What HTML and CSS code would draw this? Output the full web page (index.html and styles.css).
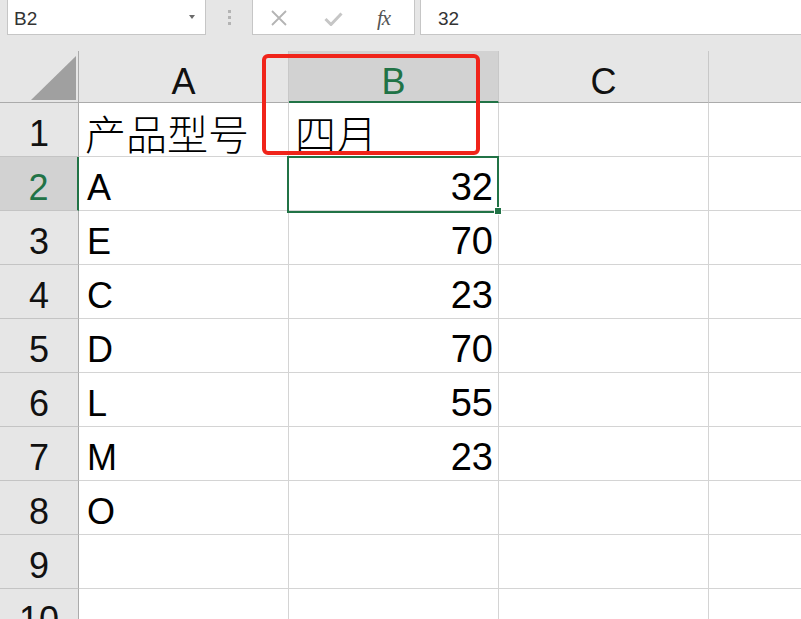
FILE: index.html
```html
<!DOCTYPE html>
<html>
<head>
<meta charset="utf-8">
<link rel="stylesheet" href="styles.css">
</head>
<body>
<div class="top">
  <div class="fbar">
    <div class="namebox"><span class="nbtext">B2</span><span class="arrow"></span></div>
    <div class="dots"><i></i><i></i><i></i></div>
    <div class="btns">
      <svg class="ic-x" width="16" height="16" viewBox="0 0 16 16"><path d="M1 1L15 15M15 1L1 15" stroke="#b4b4b4" stroke-width="1.8" fill="none"/></svg>
      <svg class="ic-ok" width="19" height="14" viewBox="0 0 19 14"><path d="M1.5 7L7 12.5L17.5 1.5" stroke="#c6c6c6" stroke-width="3" fill="none"/></svg>
      <span class="fx">fx</span>
    </div>
    <div class="formula">32</div>
  </div>
</div>
<div class="sheet">
  <div class="corner"><div class="tri"></div></div>
  <div class="ch">A</div><div class="ch sel">B</div><div class="ch">C</div><div class="ch last"></div>

  <div class="rh">1</div><div class="c"><span class="cjk">产品型号</span></div><div class="c"><span class="cjk">四月</span></div><div class="c"></div><div class="c last"></div>
  <div class="rh sel">2</div><div class="c">A</div><div class="c num">32</div><div class="c"></div><div class="c last"></div>
  <div class="rh">3</div><div class="c">E</div><div class="c num">70</div><div class="c"></div><div class="c last"></div>
  <div class="rh">4</div><div class="c">C</div><div class="c num">23</div><div class="c"></div><div class="c last"></div>
  <div class="rh">5</div><div class="c">D</div><div class="c num">70</div><div class="c"></div><div class="c last"></div>
  <div class="rh">6</div><div class="c">L</div><div class="c num">55</div><div class="c"></div><div class="c last"></div>
  <div class="rh">7</div><div class="c">M</div><div class="c num">23</div><div class="c"></div><div class="c last"></div>
  <div class="rh">8</div><div class="c">O</div><div class="c num"></div><div class="c"></div><div class="c last"></div>
  <div class="rh">9</div><div class="c"></div><div class="c num"></div><div class="c"></div><div class="c last"></div>
  <div class="rh">10</div><div class="c"></div><div class="c num"></div><div class="c"></div><div class="c last"></div>

  <div class="selbox"><div class="handle"></div></div>
  <div class="mark"></div>
</div>
</body>
</html>
```

FILE: styles.css
```css
* { box-sizing: border-box; margin: 0; padding: 0; }
html, body { width: 801px; height: 619px; overflow: hidden; background: #fff; }
body { font-family: "Liberation Sans", "Noto Sans CJK SC", sans-serif; color: #000; }

.top { background: #e6e6e6; height: 51px; }
.fbar { display: flex; height: 35px; }
.namebox {
  margin-left: 7px; width: 199px; height: 35px; background: #fff;
  border: 1px solid #c6c6c6; border-top: 0;
  display: flex; justify-content: space-between; align-items: flex-start;
}
.nbtext { font-size: 19px; line-height: 28px; padding: 5px 0 0 6px; color: #333; }
.arrow {
  margin: 15px 10px 0 0; width: 0; height: 0;
  border-left: 3.5px solid transparent; border-right: 3.5px solid transparent;
  border-top: 4px solid #6a6a6a;
}
.dots { width: 46px; display: flex; flex-direction: column; align-items: center; gap: 3px; padding-top: 10px; }
.dots i { display: block; width: 3px; height: 3px; background: #b4b4b4; }
.btns {
  width: 163px; height: 35px; background: #fff; border: 1px solid #c6c6c6; border-top: 0;
  display: flex; align-items: flex-start;
}
.ic-x { margin: 10px 0 0 18px; }
.ic-ok { margin: 12px 0 0 37px; }
.fx {
  margin: 5px 0 0 34px; font-family: "Liberation Serif", serif; font-style: italic;
  font-size: 21px; line-height: 26px; color: #555; letter-spacing: -1px;
}
.formula {
  flex: 1; margin-left: 5px; height: 35px; background: #fff;
  border: 1px solid #c6c6c6; border-top: 0; border-right: 0;
  font-size: 19px; line-height: 28px; padding: 5px 0 0 17px; color: #333;
}

.sheet {
  position: relative; display: grid;
  grid-template-columns: 79px 210px 210px 210px 92px;
  grid-template-rows: 52px repeat(10, 54px);
}
.corner {
  background: #e6e6e6; border-right: 1px solid #ababab; border-bottom: 1px solid #ababab;
  display: flex; justify-content: flex-end; align-items: flex-end; padding: 0 2px 2px 0;
}
.tri { width: 45px; height: 44px; background: #a0a0a0; clip-path: polygon(100% 0, 100% 100%, 0 100%); }
.ch {
  background: #e6e6e6; border-right: 1px solid #c8c8c8; border-bottom: 1px solid #ababab;
  text-align: center; font-size: 36px; line-height: 44px; padding-top: 9px; color: #111;
}
.ch.sel { background: #d2d2d2; color: #217346; border-bottom: 2px solid #217346; }
.rh {
  background: #e6e6e6; border-right: 1px solid #ababab; border-bottom: 1px solid #c4c4c4;
  text-align: center; font-size: 36px; line-height: 44px; padding-top: 9px; color: #111;
}
.rh.sel { background: #d2d2d2; color: #217346; border-right: 2px solid #217346; }
.c {
  border-right: 1px solid #d4d4d4; border-bottom: 1px solid #d4d4d4;
  font-size: 36px; line-height: 44px; padding: 9px 8px 0 8px;
  white-space: nowrap;
}
.c.num { text-align: right; padding-right: 5px; font-size: 38px; line-height: 43px; }
.last { border-right: 0; }
.cjk { font-family: "Noto Sans CJK SC", sans-serif; font-weight: 300; font-size: 41px; line-height: 1; margin-left: -2px; }

.selbox { position: absolute; left: 287px; top: 105px; width: 212px; height: 57px; border: 2px solid #217346; }
.handle { position: absolute; right: -4px; bottom: -3px; width: 6px; height: 6px; background: #217346; outline: 1px solid #fff; }
.mark { position: absolute; left: 262px; top: 3px; width: 218px; height: 101px; border: 4px solid #f0241a; border-radius: 6px; }
```
